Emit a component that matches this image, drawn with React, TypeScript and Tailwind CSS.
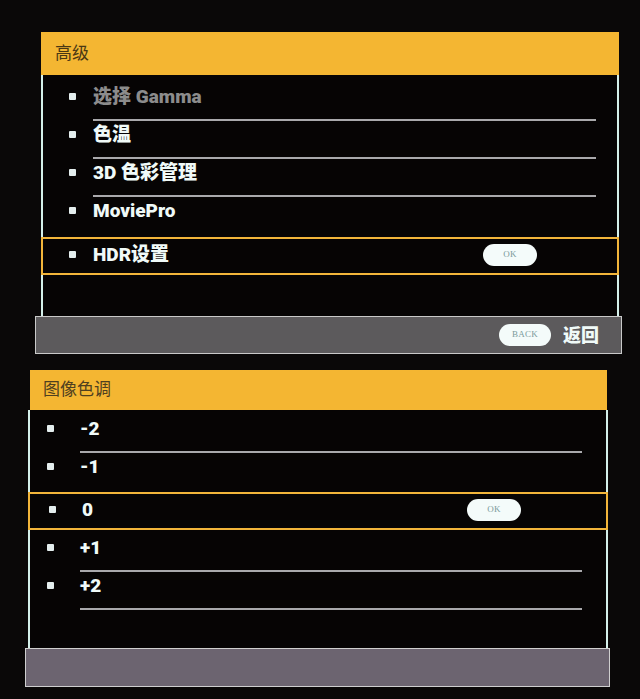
const FONT = "font-['Roboto','Noto_Sans_CJK_SC',sans-serif]";

type Item = { label: string; dim?: boolean; line?: boolean };

function Bullet() {
  return <span className="block w-[7px] h-[7px] rounded-[1px] bg-[#e4eeee]" />;
}

function Pill({ text, className = "" }: { text: string; className?: string }) {
  return (
    <span
      className={`flex items-center justify-center rounded-full bg-[#f4fbfa] text-[9px] tracking-wide text-[#7a9a9a] font-['Liberation_Serif',serif] ${className}`}
    >
      {text}
    </span>
  );
}

function Row({ item, bulletX, textX, lineEnd }: { item: Item; bulletX: string; textX: string; lineEnd: string }) {
  return (
    <div className="flex flex-col">
      <div className={`flex items-center h-[26px] ${bulletX}`}>
        <Bullet />
        <span
          className={`${textX} text-[19px] font-black leading-none ${
            item.dim ? "text-[#8c8c8c]" : "text-[#f0faf8]"
          }`}
        >
          {item.label}
        </span>
      </div>
      {item.line ? (
        <div className={`mt-[10px] h-[2px] bg-[#a9a9ac] ${lineEnd}`} />
      ) : (
        <div className="mt-[10px] h-[2px]" />
      )}
    </div>
  );
}

function Selected({
  label,
  bulletX,
  textX,
  pillClass,
}: {
  label: string;
  bulletX: string;
  textX: string;
  pillClass: string;
}) {
  return (
    <div className="-mx-[2px] h-[38px] border-2 border-[#f2b53a] flex items-center pb-[3px]">
      <div className={`flex items-center ${bulletX}`}>
        <Bullet />
        <span className={`${textX} text-[19px] font-black leading-none text-[#f0faf8]`}>{label}</span>
      </div>
      <Pill text="OK" className={pillClass} />
    </div>
  );
}

export default function App() {
  const first: Item[] = [
    { label: "选择 Gamma", dim: true, line: true },
    { label: "色温", line: true },
    { label: "3D 色彩管理", line: true },
    { label: "MoviePro" },
  ];
  const second: Item[] = [
    { label: "-2", line: true },
    { label: "-1" },
  ];
  const third: Item[] = [
    { label: "+1", line: true },
    { label: "+2", line: true },
  ];

  return (
    <div className={`w-[640px] h-[699px] bg-[#0a0808] pt-[32px] overflow-hidden ${FONT}`}>
      {/* 高级 */}
      <div className="flex flex-col">
        <div className="ml-[41px] w-[578px] h-[43px] bg-[#f4b632] flex items-center pl-[14px]">
          <span className="text-[17px] text-[#4a3814]">高级</span>
        </div>
        <div className="ml-[41px] w-[578px] h-[241px] bg-[#060404] border-x-2 border-[#d4f0ea] pt-[8px] flex flex-col">
          {first.map((it) => (
            <Row key={it.label} item={it} bulletX="pl-[26px]" textX="ml-[17px]" lineEnd="ml-[50px] w-[503px]" />
          ))}
          <div className="mt-[2px]">
            <Selected label="HDR设置" bulletX="pl-[26px]" textX="ml-[17px]" pillClass="ml-[314px] w-[54px] h-[22px]" />
          </div>
        </div>
        <div className="ml-[35px] w-[587px] h-[38px] bg-[#5c5a5c] border border-[#c9c9c9] flex items-center justify-end pr-[22px] gap-[12px]">
          <Pill text="BACK" className="w-[52px] h-[22px]" />
          <span className="text-[18px] font-black text-[#f0faf8]">返回</span>
        </div>
      </div>

      {/* 图像色调 */}
      <div className="flex flex-col mt-[16px]">
        <div className="ml-[30px] w-[577px] h-[40px] bg-[#f4b632] flex items-center pl-[13px]">
          <span className="text-[17px] text-[#4f4020]">图像色调</span>
        </div>
        <div className="ml-[28px] w-[580px] h-[238px] bg-[#060404] border-x-2 border-[#d4f0ea] pt-[5px] flex flex-col">
          {second.map((it) => (
            <Row key={it.label} item={it} bulletX="pl-[17px]" textX="ml-[26px]" lineEnd="ml-[50px] w-[502px]" />
          ))}
          <div className="mt-[1px]">
            <Selected label="0" bulletX="pl-[19px]" textX="ml-[26px]" pillClass="ml-[374px] w-[54px] h-[22px]" />
          </div>
          <div className="mt-[4px]">
            {third.map((it) => (
              <Row key={it.label} item={it} bulletX="pl-[17px]" textX="ml-[26px]" lineEnd="ml-[50px] w-[502px]" />
            ))}
          </div>
        </div>
        <div className="ml-[25px] w-[585px] h-[39px] bg-[#6c6470] border border-[#cfcfcf]" />
      </div>
    </div>
  );
}
